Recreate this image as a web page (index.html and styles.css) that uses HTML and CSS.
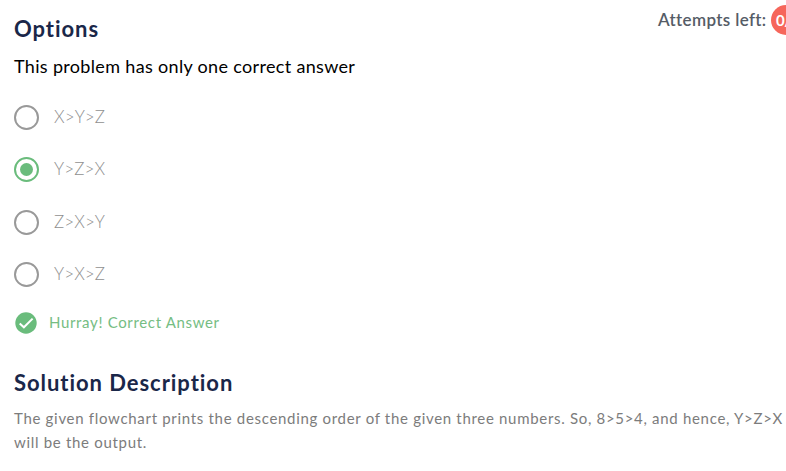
FILE: index.html
```
<!DOCTYPE html>
<html lang="en">
<head>
<meta charset="utf-8">
<title>Options</title>
<link rel="stylesheet" href="styles.css">
</head>
<body>
<main class="problem">
  <header class="top">
    <h2 class="title">Options</h2>
    <div class="attempts"><span class="attempts-label">Attempts left:</span><span class="badge">0/1</span></div>
  </header>
  <p class="hint">This problem has only one correct answer</p>
  <ul class="options">
    <li class="option"><span class="radio"></span><span class="option-text">X&gt;Y&gt;Z</span></li>
    <li class="option"><span class="radio checked"></span><span class="option-text">Y&gt;Z&gt;X</span></li>
    <li class="option"><span class="radio"></span><span class="option-text">Z&gt;X&gt;Y</span></li>
    <li class="option"><span class="radio"></span><span class="option-text">Y&gt;X&gt;Z</span></li>
  </ul>
  <div class="result">
    <svg class="check" viewBox="0 0 22 22" width="22" height="22"><circle cx="11" cy="11" r="10.7" fill="#6abc7c"/><path d="M4.7 11.4 8.9 15.3 17.6 6.6" fill="none" stroke="#fff" stroke-width="2"/></svg>
    <span class="result-text">Hurray! Correct Answer</span>
  </div>
  <h2 class="title solution-title">Solution Description</h2>
  <p class="description">The given flowchart prints the descending order of the given three numbers. So, 8&gt;5&gt;4, and hence, Y&gt;Z&gt;X<br>will be the output.</p>
</main>
</body>
</html>
```
FILE: styles.css
```
* { box-sizing: border-box; }
body {
  margin: 0;
  height: 471px;
  overflow: hidden;
  background: #fff;
  font-family: Lato, "Open Sans", sans-serif;
}
.problem { padding-left: 14px; }
.top {
  display: flex;
  justify-content: space-between;
  align-items: flex-start;
  height: 52px;
  margin-right: -15px;
}
.title {
  margin: 0;
  color: #1a2749;
  font-size: 22px;
  line-height: 28px;
  font-weight: 700;
  letter-spacing: 0.95px;
  white-space: nowrap;
}
.top .title { margin-top: 15px; }
.attempts {
  display: flex;
  align-items: center;
  height: 30px;
  margin-top: 5px;
}
.attempts-label {
  width: 113px;
  margin-top: -1px;
  color: #555c66;
  font-size: 17px;
  font-weight: 600;
  letter-spacing: 0.35px;
  white-space: nowrap;
}
.badge {
  width: 30px;
  height: 30px;
  border-radius: 50%;
  background: #f6665b;
  color: #fff;
  font-size: 15px;
  line-height: 30px;
  font-weight: 700;
  letter-spacing: -0.5px;
  padding-left: 5px;
}
.hint {
  margin: 0;
  height: 28px;
  color: #000;
  font-size: 18px;
  line-height: 28px;
  letter-spacing: 0.33px;
}
.options {
  display: flex;
  flex-direction: column;
  gap: 27.33px;
  margin: 25px 0 0;
  padding: 0;
  list-style: none;
}
.option {
  display: flex;
  align-items: center;
  gap: 15px;
  height: 25px;
}
.radio {
  display: grid;
  place-items: center;
  width: 25px;
  height: 25px;
  border: 2px solid #999;
  border-radius: 50%;
}
.checked { border-color: #6abc7c; }
.checked::after {
  content: "";
  width: 13px;
  height: 13px;
  border-radius: 50%;
  background: #6abc7c;
}
.option-text {
  color: #909090;
  font-size: 17px;
  font-weight: 300;
  line-height: 24px;
  letter-spacing: 0.1px;
  margin-top: -1px;
}
.result {
  display: flex;
  align-items: center;
  height: 24px;
  margin-top: 24px;
  padding-left: 1px;
}
.check { margin-right: 12px; }
.result-text {
  margin-top: -2px;
  color: #75bd83;
  font-size: 15px;
  letter-spacing: 0.66px;
}
.solution-title { margin-top: 34px; }
.description {
  margin: 9px 0 0;
  color: #7c7c7c;
  font-size: 15px;
  line-height: 24px;
  letter-spacing: 0.69px;
  white-space: nowrap;
}
```
